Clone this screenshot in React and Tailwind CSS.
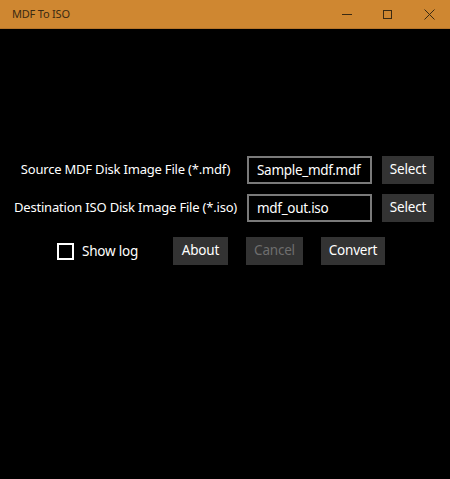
import { useState } from 'react';

const font = { fontFamily: '"Noto Sans", "Open Sans", sans-serif' };

const Button = ({ children, disabled, className = '' }) => (
  <button
    disabled={disabled}
    className={`h-[28px] bg-[#333333] text-[13.5px] tracking-[-0.2px] leading-none ${
      disabled ? 'text-[#6e6e6e]' : 'text-white'
    } ${className}`}
  >
    {children}
  </button>
);

const App = () => {
  const [showLog, setShowLog] = useState(false);

  return (
    <div className="w-[450px] h-[479px] bg-black flex flex-col" style={font}>
      {/* Title bar */}
      <div className="h-[29px] bg-[#cf8731] flex items-center justify-between border-b border-[#b8752a]">
        <span className="pl-[12px] text-[11px] tracking-[-0.2px] text-[#3b2a12]">MDF To ISO</span>
        <div className="flex items-center h-full">
          <div className="w-[40px] h-full flex items-center justify-center">
            <div className="w-[10px] h-px bg-[#3b2a12]" />
          </div>
          <div className="w-[41px] h-full flex items-center justify-center">
            <div className="w-[9px] h-[9px] border border-[#3b2a12]" />
          </div>
          <div className="w-[42px] h-full flex items-center justify-center">
            <svg width="11" height="11" viewBox="0 0 11 11" stroke="#3b2a12" strokeWidth="1">
              <path d="M0.5 0.5 L10.5 10.5 M10.5 0.5 L0.5 10.5" />
            </svg>
          </div>
        </div>
      </div>

      {/* Form */}
      <div className="pt-[127px] flex flex-col text-[13px] tracking-[-0.2px] text-white">
        <div className="grid grid-cols-[223px_125px_52px] gap-x-[10px] gap-y-[10px] pl-[14px] items-center">
          <span className="text-center whitespace-nowrap">Source MDF Disk Image File (*.mdf)</span>
          <div className="h-[28px] border-2 border-[#7a7a7a] flex items-center pl-[8px] text-[13.5px] tracking-[-0.3px]">
            Sample_mdf.mdf
          </div>
          <Button className="w-[52px]">Select</Button>

          <span className="text-center whitespace-nowrap">Destination ISO Disk Image File (*.iso)</span>
          <div className="h-[28px] border-2 border-[#7a7a7a] flex items-center pl-[8px] text-[13.5px] tracking-[-0.3px]">
            mdf_out.iso
          </div>
          <Button className="w-[52px]">Select</Button>
        </div>

        <div className="flex items-center mt-[15px] pl-[57px]">
          <label className="flex items-center cursor-pointer w-[116px]" onClick={() => setShowLog(!showLog)}>
            <span className="w-[17px] h-[17px] border-2 border-white flex items-center justify-center text-[11px]">
              {showLog ? '✓' : ''}
            </span>
            <span className="ml-[8px] text-[13.5px]">Show log</span>
          </label>
          <Button className="w-[55px]">About</Button>
          <Button disabled className="w-[57px] ml-[18px]">Cancel</Button>
          <Button className="w-[64px] ml-[18px]">Convert</Button>
        </div>
      </div>
    </div>
  );
};

export default App;
